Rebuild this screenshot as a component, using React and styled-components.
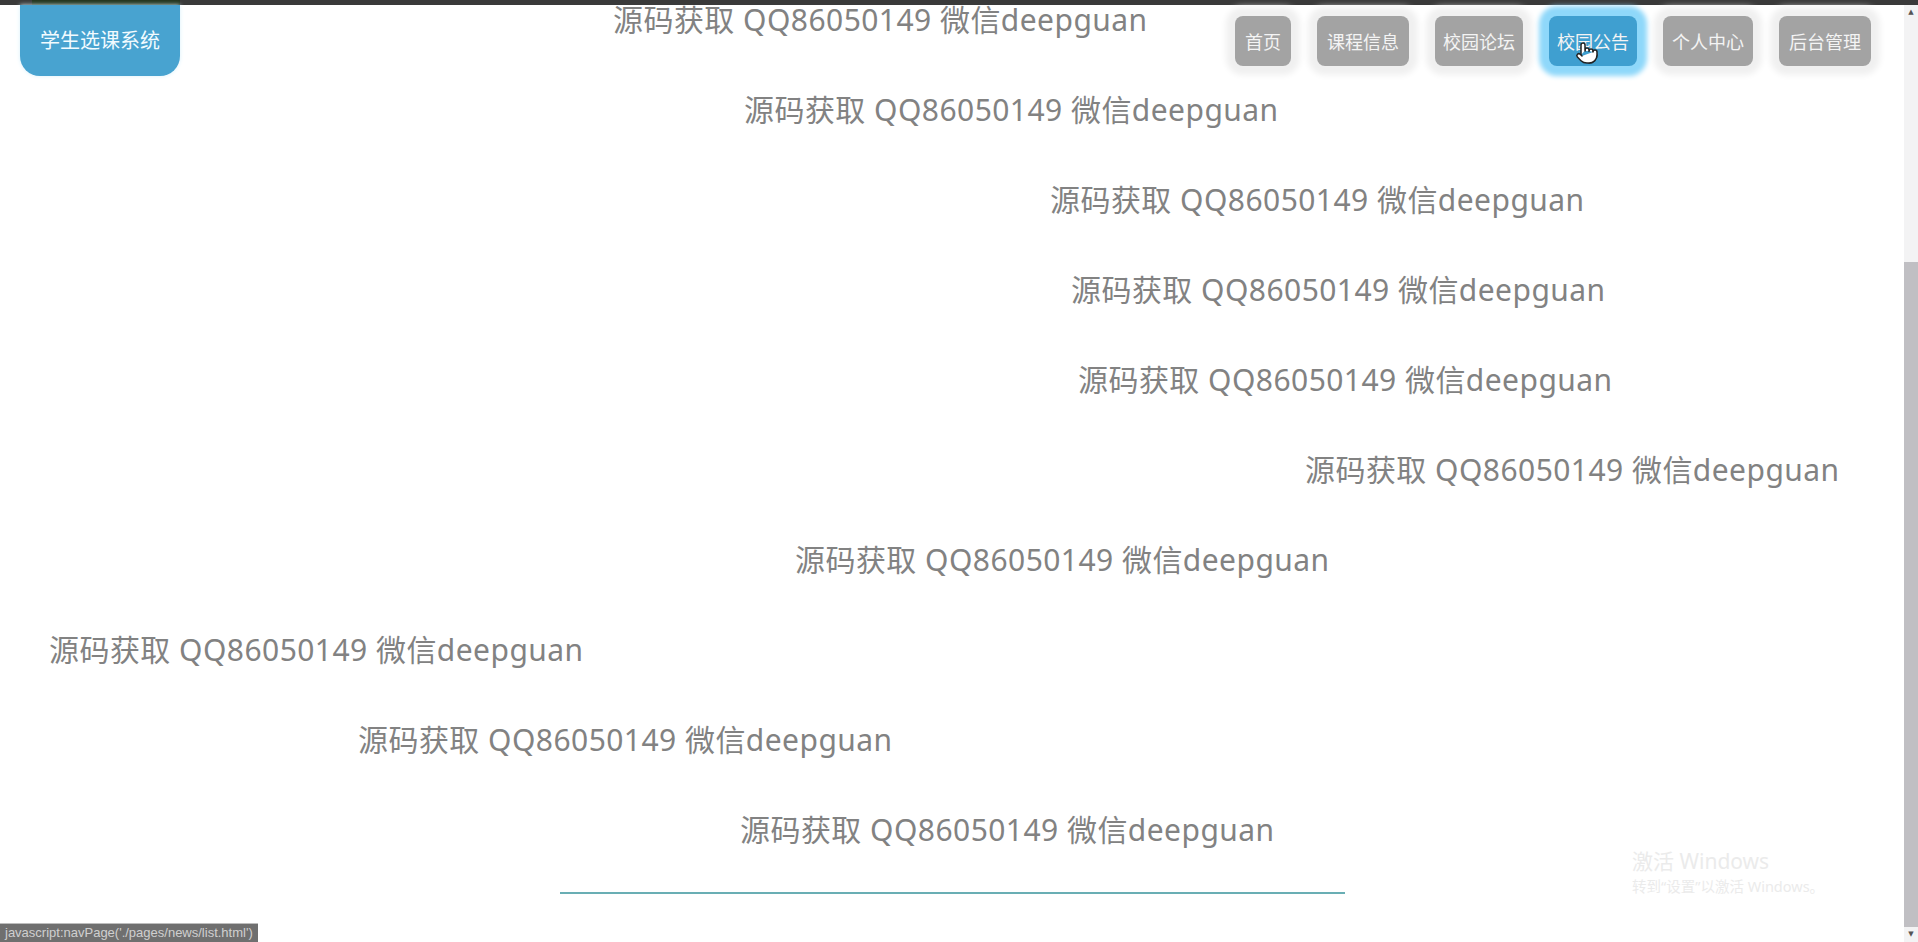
import React from "react";
import styled, { createGlobalStyle } from "styled-components";
import { Pointer } from "lucide-react";

const Global = createGlobalStyle`
  html, body { margin: 0; padding: 0; height: 100%; overflow: hidden; background: #fff; }
  #root { height: 100%; }
`;

const cjk = `"Noto Sans", "Noto Sans CJK SC", sans-serif`;

const Page = styled.div`
  position: relative;
  width: 1918px;
  height: 942px;
  display: flex;
  flex-direction: column;
  overflow: hidden;
  font-family: ${cjk};
`;

const TopStrip = styled.div`
  flex: none;
  height: 5px;
  background: linear-gradient(90deg, #3a3a3a 0 32px, #24361f 32px 180px, #3a3a3a 180px 100%);
`;

const Body = styled.div`
  flex: 1;
  min-height: 0;
  display: flex;
`;

const Main = styled.main`
  position: relative;
  flex: 1;
  min-width: 0;
`;

const Header = styled.header`
  position: absolute;
  top: 0;
  left: 20px;
  right: 33px;
  display: flex;
  justify-content: space-between;
  align-items: flex-start;
`;

const Logo = styled.div`
  width: 160px;
  height: 71px;
  box-sizing: border-box;
  padding-bottom: 3px;
  display: flex;
  align-items: center;
  justify-content: center;
  background: #48a3d0;
  border-radius: 0 0 20px 20px;
  box-shadow: 0 0 4px #d9f1fb;
  color: #f2fbff;
  font-size: 20px;
`;

const Nav = styled.nav`
  display: flex;
  gap: 26px;
  margin-top: 11px;
`;

const NavItem = styled.a`
  box-sizing: border-box;
  height: 50px;
  padding: 0 ${(p) => p.$pad}px;
  display: flex;
  align-items: center;
  border-radius: 8px;
  font-size: 18px;
  color: #f4f4f4;
  white-space: nowrap;
  background: ${(p) => (p.$active ? "#3f9fd0" : "#a3a3a3")};
  box-shadow: ${(p) =>
    p.$active ? "0 0 5px 10px #8fd8fa" : "0 0 6px 9px #f0f0f0"};
`;

const Hand = styled(Pointer)`
  position: absolute;
  left: 1575px;
  top: 36px;
  fill: #fff;
  color: #222;
`;

const Marks = styled.div`
  display: flex;
  flex-direction: column;
  gap: 60px;
`;

const Mark = styled.div`
  margin-left: ${(p) => p.$left}px;
  height: 30px;
  line-height: 30px;
  font-size: 30px;
  letter-spacing: 0.45px;
  color: #828282;
  white-space: nowrap;
`;

const Rule = styled.div`
  margin: 47px 0 0 560px;
  width: 785px;
  height: 2px;
  background: #69aeb4;
`;

const StatusBar = styled.div`
  position: absolute;
  left: 0;
  bottom: 0;
  width: 258px;
  height: 19px;
  box-sizing: border-box;
  padding-left: 5px;
  background: #6f6f6f;
  border-top: 1px solid #bdbdbd;
  color: #cfcfcf;
  font: 13px/18px "Liberation Sans", sans-serif;
  white-space: nowrap;
  overflow: hidden;
`;

const Activation = styled.div`
  position: absolute;
  left: 1632px;
  top: 843px;
  color: #ebebeb;
  display: flex;
  flex-direction: column;
  gap: 2px;
`;

const ActivationTitle = styled.div`
  font-size: 21px;
  line-height: 26px;
`;

const ActivationHint = styled.div`
  font-size: 14.5px;
  line-height: 20px;
`;

const Scrollbar = styled.aside`
  flex: none;
  width: 14px;
  display: flex;
  flex-direction: column;
  background: #f3f3f4;
`;

const Arrow = styled.div`
  flex: none;
  height: 15px;
  display: flex;
  align-items: center;
  justify-content: center;
  color: #555;
  font-size: 7px;
  line-height: 1;
  font-family: "DejaVu Sans", sans-serif;
`;

const Track = styled.div`
  flex: 1;
  display: flex;
  flex-direction: column;
  justify-content: flex-end;
`;

const Thumb = styled.div`
  height: 665px;
  background: #c0bfc3;
`;

const marks = [613, 744, 1050, 1071, 1078, 1305, 795, 49, 358, 740];
const nav = [
  ["首页", 10],
  ["课程信息", 10],
  ["校园论坛", 8],
  ["校园公告", 8],
  ["个人中心", 9],
  ["后台管理", 10],
];

export default function App() {
  return (
    <Page>
      <Global />
      <TopStrip />
      <Body>
        <Main>
          <Marks>
            {marks.map((left, i) => (
              <Mark key={i} $left={left}>
                源码获取 QQ86050149 微信deepguan
              </Mark>
            ))}
          </Marks>
          <Rule />
          <Header>
            <Logo>学生选课系统</Logo>
            <Nav>
              {nav.map(([label, pad]) => (
                <NavItem key={label} $pad={pad} $active={label === "校园公告"}>
                  {label}
                </NavItem>
              ))}
            </Nav>
          </Header>
          <Hand size={24} strokeWidth={1.5} />
          <Activation>
            <ActivationTitle>激活 Windows</ActivationTitle>
            <ActivationHint>转到“设置”以激活 Windows。</ActivationHint>
          </Activation>
          <StatusBar>javascript:navPage('./pages/news/list.html')</StatusBar>
        </Main>
        <Scrollbar>
          <Arrow>▲</Arrow>
          <Track>
            <Thumb />
          </Track>
          <Arrow>▼</Arrow>
        </Scrollbar>
      </Body>
    </Page>
  );
}
